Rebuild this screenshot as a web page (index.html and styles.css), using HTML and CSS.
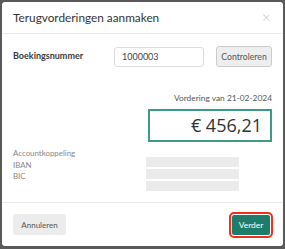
FILE: index.html
```html
<!DOCTYPE html>
<html lang="nl">
<head>
  <meta charset="UTF-8">
  <meta name="viewport" content="width=device-width, initial-scale=1.0">
  <title>Terugvorderingen aanmaken</title>
  <link rel="stylesheet" href="styles.css">
</head>
<body>
<div class="modal">
  <div class="modal-header">
    <h4>Terugvorderingen aanmaken</h4>
    <span class="close">&times;</span>
  </div>

  <div class="modal-body">
    <div class="row">
      <label for="booking">Boekingsnummer</label>
      <input type="text" id="booking" value="1000003">
      <button class="btn">Controleren</button>
    </div>

    <div class="claim">
      <div class="claim-date">Vordering van 21-02-2024</div>
      <div class="claim-amount">€ 456,21</div>
    </div>

    <div class="account">
      <div class="account-labels">
        <div>Accountkoppeling</div>
        <div>IBAN</div>
        <div>BIC</div>
      </div>
      <div class="account-values">
        <div class="placeholder"></div>
        <div class="placeholder"></div>
        <div class="placeholder"></div>
      </div>
    </div>
  </div>

  <div class="modal-footer">
    <button class="btn btn-cancel">Annuleren</button>
    <button class="btn btn-primary">Verder</button>
  </div>
</div>
</body>
</html>
```

FILE: styles.css
```css
body {
  margin: 0;
  background: #5a5a5a;
  font-family: Lato, sans-serif;
  color: #333;
  padding: 2px;
}
.modal {
  background: #fff;
  width: 281px;
  height: 244px;
  border-radius: 3px;
  display: flex;
  flex-direction: column;
}
.modal-header {
  height: 31px;
  border-bottom: 1px solid #e8e8e8;
  display: flex;
  align-items: center;
  justify-content: space-between;
  padding: 0 11px;
}
.modal-header h4 {
  margin: 0;
  font-size: 11.8px;
  font-weight: 400;
  color: #333;
}
.close {
  color: #c4c4c4;
  font-size: 16px;
  font-weight: 300;
  line-height: 1;
  margin-top: -1px;
  margin-right: 1px;
}
.modal-body {
  flex: 1;
  padding: 12px 11px 0;
}
.row {
  display: flex;
  align-items: center;
}
.row label {
  width: 101px;
  font-size: 9px;
  font-weight: 700;
  color: #3a3a3a;
  margin-top: -2px;
}
.row input {
  width: 90px;
  height: 20px;
  box-sizing: border-box;
  border: 1px solid #ddd;
  border-radius: 3px;
  padding: 0 7px;
  font-family: Lato, sans-serif;
  font-size: 9px;
  color: #444;
}
.btn {
  font-family: Lato, sans-serif;
  font-size: 8px;
  color: #555;
  background: #eee;
  border: 1px solid #ccc;
  border-radius: 3px;
  padding: 0;
  height: 20px;
}
.row .btn {
  margin-left: 12px;
  width: 56px;
  height: 21px;
  font-size: 8.7px;
}
.claim {
  display: flex;
  flex-direction: column;
  align-items: flex-end;
  margin-top: 25px;
}
.claim-date {
  font-size: 8.4px;
  color: #555;
  line-height: 12px;
}
.claim-amount {
  margin-top: 5px;
  width: 124px;
  height: 33px;
  box-sizing: border-box;
  border: 2px solid #3d9a84;
  text-align: right;
  padding-right: 8px;
  font-family: "Open Sans", sans-serif;
  font-size: 18px;
  line-height: 29px;
  color: #333;
}
.account {
  display: flex;
  margin-top: 6px;
}
.account-labels {
  width: 133px;
  font-size: 7.9px;
  color: #888;
  line-height: 11.5px;
}
.account-values {
  padding-top: 9px;
}
.placeholder {
  width: 93px;
  height: 10px;
  background: #ebebeb;
  margin-bottom: 2px;
}
.modal-footer {
  height: 43px;
  border-top: 1px solid #e8e8e8;
  display: flex;
  align-items: center;
  justify-content: space-between;
  padding: 0 11px 0 11px;
}
.btn-cancel {
  height: 21px;
  width: 53px;
  border: none;
  background: #ececec;
  color: #555;
}
.btn-primary {
  height: 22px;
  width: 40px;
  border: 1px solid #fff;
  background: #1e7d6a;
  color: #fff;
  font-size: 8.4px;
  outline: 2px solid #f0301c;
  outline-offset: 0;
  margin-right: 1px;
}
```
